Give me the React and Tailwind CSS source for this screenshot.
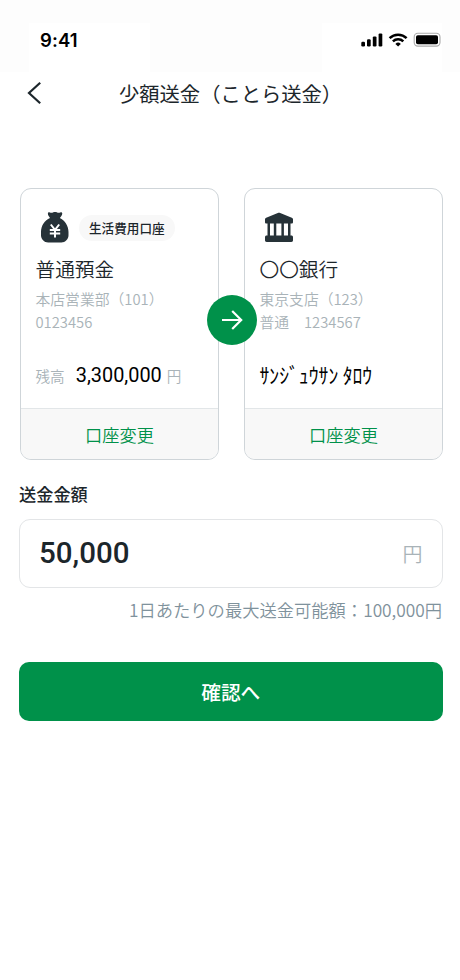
import React, { useState } from 'react';

function StatusBar() {
  return (
    <div className="flex h-[72px] bg-[#fdfdfd] pt-[23px]">
      <div className="ml-[29px] h-[52px] w-[121px] bg-white pl-[11px] pt-[3px] font-['Inter',sans-serif] text-[18.5px] font-semibold leading-[28px] tracking-[0.1px] text-black">9:41</div>
      <div className="ml-auto mr-[18px] flex h-[52px] w-[120px] justify-end bg-white pt-[9px]">
        <svg width="82" height="17" viewBox="0 0 82 17" fill="none">
          <g fill="#000">
            <rect x="1.3" y="9.8" width="3.7" height="4.6" rx="1.2" />
            <rect x="7" y="7.2" width="3.7" height="7.2" rx="1.2" />
            <rect x="12.8" y="4.4" width="3.7" height="10" rx="1.2" />
            <rect x="18.6" y="1.4" width="3.7" height="13" rx="1.2" />
          </g>
          <g stroke="#000" strokeWidth="2.5">
            <path d="M29.6 6.1a12.2 12.2 0 0 1 17 0" />
            <path d="M32.9 9.4a7.4 7.4 0 0 1 10.4 0" />
          </g>
          <path d="M35.4 11.9a3.9 3.9 0 0 1 5.4 0l-2.7 2.7z" fill="#000" />
          <rect x="54.2" y="1.3" width="25.8" height="12.8" rx="3.6" stroke="#aaa" strokeWidth="1.1" />
          <rect x="56" y="3.2" width="22" height="9" rx="1.8" fill="#000" />
        </svg>
      </div>
    </div>
  );
}

function MoneyBagIcon() {
  return (
    <svg width="30" height="32" viewBox="0 0 30 32" fill="none">
      <path
        d="M7.9 1.7c0-1.2.8-1.6 1.9-1.3 1 .3 2.1.5 3.1.1 1.4-.6 2.9-.6 4.3 0 1 .4 2.1.2 3.1-.1 1.2-.3 2.2.3 1.9 1.5-.4 1.8-1.500 2.800-2.400 4.100 4.900 2.100 8.700 8 8.700 13.900v3.300c0 4-3.200 7.200-7.200 7.200H8.200C4.200 30.400 1 27.200 1 23.200v-3.300C1 13.800 4.700 8.100 10 6 9.300 4.700 7.900 3.500 7.900 1.700z"
        fill="#263238"
      />
      <path d="M10.8 12.5l4.200 5.3 4.200-5.300M15 17.800v7.600M9.800 18h10.400M9.800 21.600h10.400" stroke="#fff" strokeWidth="2" />
    </svg>
  );
}

function BankIcon() {
  return (
    <svg width="30" height="32" viewBox="0 0 30 32" fill="#263238">
      <path d="M1 7.600c0-.8.4-1.500 1.200-1.800L13.800.9c.8-.3 1.600-.3 2.400 0l11.600 4.900c.8.3 1.200 1 1.200 1.800v2.600c0 .8-.6 1.400-1.400 1.400H2.400c-.8 0-1.400-.6-1.400-1.400z" />
      <path d="M3.500 11h2.500v13H3.500zM9.800 11h2.500v13H9.800zM17.400 11h2.500v13h-2.500zM24 11h2.500v13H24z" />
      <path d="M2.600 23.500h24.800c.9 0 1.600.7 1.600 1.600v3.200c0 .9-.7 1.600-1.600 1.600H2.600c-.9 0-1.600-.7-1.600-1.600v-3.200c0-.9.7-1.600 1.600-1.600z" />
    </svg>
  );
}

function AccountCard({ icon, tag, name, branch, number, children }) {
  return (
    <div className="flex h-[272px] w-[199px] shrink-0 flex-col overflow-hidden rounded-[11px] border border-[#cfd5d9] bg-white">
      <div className="flex-1 pl-[14.5px]">
        <div className="flex h-[66px] items-center pl-[4.5px] pt-[11px]">
          {icon}
          {tag && <span className="ml-[9px] h-[26px] rounded-full bg-[#f8f8f8] px-[10px] text-[12.6px] font-medium leading-[26px]">{tag}</span>}
        </div>
        <div className="text-[19.7px] font-[350] leading-[28px]">{name}</div>
        <div className="mt-[4px] whitespace-pre text-[14.8px] font-[350] leading-[23px] text-[#a9b3b8]">
          <div>{branch}</div>
          <div>{number}</div>
        </div>
        <div className="mt-[27px] flex h-[32px] items-center">{children}</div>
      </div>
      <button type="button" className="h-[51px] border-t border-[#e2e6e8] bg-[#f8f8f8] pt-px text-[17.2px] font-[350] text-[#00914a]">口座変更</button>
    </div>
  );
}

export default function App() {
  const [amount, setAmount] = useState('50,000');

  return (
    <div lang="ja" className="flex h-[980px] w-[460px] flex-col bg-white font-['Noto_Sans_CJK_JP',sans-serif] text-[#1c262b]">
      <StatusBar />

      <header className="flex h-[42px] items-center pl-[27px]">
        <svg width="15" height="24" viewBox="0 0 15 24" fill="none" stroke="#1c262b" strokeWidth="2.2">
          <path d="M13.2 1.7L2 12l11.200 10.300" />
        </svg>
        <h1 className="ml-[77px] whitespace-nowrap text-[20.3px] font-normal leading-[30px]">少額送金（ことら送金）</h1>
      </header>

      <main className="pl-[19px] pr-[17px] pt-[74px]">
        <div className="relative flex gap-[25px] pl-px">
          <AccountCard icon={<MoneyBagIcon />} tag="生活費用口座" name="普通預金" branch="本店営業部（101）" number="0123456">
            <span className="text-[14.6px] font-[350] text-[#a9b3b8]">残高</span>
            <span className="ml-[11px] font-['Roboto',sans-serif] text-[19.9px] text-black">3,300,000</span>
            <span className="ml-[5px] text-[14.6px] font-[350] text-[#a9b3b8]">円</span>
          </AccountCard>
          <AccountCard icon={<BankIcon />} name="〇〇銀行" branch="東京支店（123）" number="普通　1234567">
            <span className="-mt-[3px] inline-block scale-y-[1.06] text-[19.7px] text-black">ｻﾝｼﾞｭｳｻﾝ ﾀﾛｳ</span>
          </AccountCard>
          <div className="absolute left-[187.5px] top-[106.500px] flex size-[50px] items-center justify-center rounded-full bg-[#00914a]">
            <svg width="22" height="22" viewBox="0 0 22 22" fill="none" stroke="#fff" strokeWidth="2.2">
              <path d="M1 11h19M11.2 2l9 9-9 9" />
            </svg>
          </div>
        </div>

        <div className="mt-[21px] text-[17.2px] font-medium leading-[26px]">送金金額</div>
        <div className="mt-[12px] flex h-[69px] w-[423.5px] items-center rounded-[11px] border border-[#e3e5e7] px-[19px]">
          <input
            value={amount}
            onChange={(e) => setAmount(e.target.value)}
            className="-mt-px w-[300px] font-['Roboto',sans-serif] text-[29.5px] font-medium outline-none"
          />
          <span className="ml-auto text-[20px] font-[350] text-[#a9b3b8]">円</span>
        </div>
        <div className="mt-[9px] w-[423px] whitespace-nowrap text-right text-[17.3px] font-[350] leading-[26px] text-[#7f929c]">1日あたりの最大送金可能額：100,000円</div>
        <button type="button" className="mt-[39px] h-[59px] w-[423.5px] rounded-[10px] bg-[#00914a] text-[19.7px] font-medium text-white">確認へ</button>
      </main>
    </div>
  );
}
